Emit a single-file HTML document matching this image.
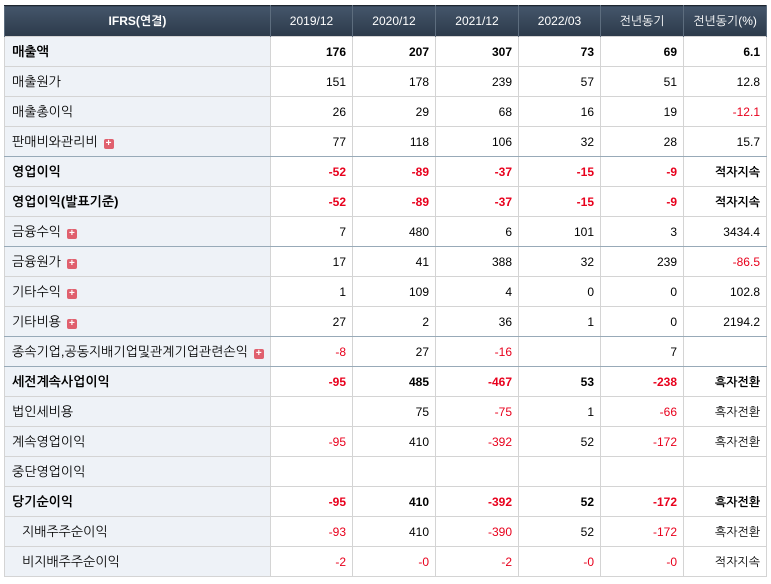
<!DOCTYPE html>
<html><head><meta charset="utf-8"><style>
body{margin:0;background:#fff;}
table{position:absolute;left:4px;top:5px;border-collapse:collapse;table-layout:fixed;width:762px;font-family:"Liberation Sans","NanumGothic","Noto Sans CJK KR",sans-serif;font-size:12px;color:#000;}
th{height:30px;padding:0;background:linear-gradient(#44556a,#2c3a4a);color:#fff;font-weight:normal;border-left:1px solid #5d6d7e;border-right:1px solid #5d6d7e;border-top:1px solid #1e2630;text-align:center;font-size:12px;}
th.f{font-weight:bold}
td{height:29px;padding:0 6px 0 0;border:1px solid #d4d4d4;text-align:right;line-height:14px;}
td.l{text-align:left;padding-left:7px;background:#eef2f7;font-size:13px;}
td.in{padding-left:17px}
tr.b td{font-weight:bold}
.r{color:#e8001c}
tr.e td{border-bottom-color:#98aab8}
.p{display:inline-block;width:10px;height:10px;background:#e0606e;border-radius:2px;color:#fff;font-size:10px;line-height:10px;text-align:center;margin-left:6px;vertical-align:0px;font-weight:bold}
</style></head><body>
<table>
<colgroup><col style="width:266px"><col style="width:82px"><col style="width:83px"><col style="width:83px"><col style="width:82px"><col style="width:83px"><col style="width:83px"></colgroup>
<tr><th class="f">IFRS(연결)</th><th>2019/12</th><th>2020/12</th><th>2021/12</th><th>2022/03</th><th>전년동기</th><th>전년동기(%)</th></tr>
<tr class="b"><td class="l">매출액</td><td>176</td><td>207</td><td>307</td><td>73</td><td>69</td><td>6.1</td></tr>
<tr><td class="l">매출원가</td><td>151</td><td>178</td><td>239</td><td>57</td><td>51</td><td>12.8</td></tr>
<tr><td class="l">매출총이익</td><td>26</td><td>29</td><td>68</td><td>16</td><td>19</td><td class="r">-12.1</td></tr>
<tr class="e"><td class="l">판매비와관리비<span class="p">+</span></td><td>77</td><td>118</td><td>106</td><td>32</td><td>28</td><td>15.7</td></tr>
<tr class="b"><td class="l">영업이익</td><td class="r">-52</td><td class="r">-89</td><td class="r">-37</td><td class="r">-15</td><td class="r">-9</td><td>적자지속</td></tr>
<tr class="b"><td class="l">영업이익(발표기준)</td><td class="r">-52</td><td class="r">-89</td><td class="r">-37</td><td class="r">-15</td><td class="r">-9</td><td>적자지속</td></tr>
<tr class="e"><td class="l">금융수익<span class="p">+</span></td><td>7</td><td>480</td><td>6</td><td>101</td><td>3</td><td>3434.4</td></tr>
<tr><td class="l">금융원가<span class="p">+</span></td><td>17</td><td>41</td><td>388</td><td>32</td><td>239</td><td class="r">-86.5</td></tr>
<tr><td class="l">기타수익<span class="p">+</span></td><td>1</td><td>109</td><td>4</td><td>0</td><td>0</td><td>102.8</td></tr>
<tr class="e"><td class="l">기타비용<span class="p">+</span></td><td>27</td><td>2</td><td>36</td><td>1</td><td>0</td><td>2194.2</td></tr>
<tr class="e"><td class="l">종속기업,공동지배기업및관계기업관련손익<span class="p">+</span></td><td class="r">-8</td><td>27</td><td class="r">-16</td><td></td><td>7</td><td></td></tr>
<tr class="b"><td class="l">세전계속사업이익</td><td class="r">-95</td><td>485</td><td class="r">-467</td><td>53</td><td class="r">-238</td><td>흑자전환</td></tr>
<tr><td class="l">법인세비용</td><td></td><td>75</td><td class="r">-75</td><td>1</td><td class="r">-66</td><td>흑자전환</td></tr>
<tr><td class="l">계속영업이익</td><td class="r">-95</td><td>410</td><td class="r">-392</td><td>52</td><td class="r">-172</td><td>흑자전환</td></tr>
<tr><td class="l">중단영업이익</td><td></td><td></td><td></td><td></td><td></td><td></td></tr>
<tr class="b"><td class="l">당기순이익</td><td class="r">-95</td><td>410</td><td class="r">-392</td><td>52</td><td class="r">-172</td><td>흑자전환</td></tr>
<tr><td class="l in">지배주주순이익</td><td class="r">-93</td><td>410</td><td class="r">-390</td><td>52</td><td class="r">-172</td><td>흑자전환</td></tr>
<tr><td class="l in">비지배주주순이익</td><td class="r">-2</td><td class="r">-0</td><td class="r">-2</td><td class="r">-0</td><td class="r">-0</td><td>적자지속</td></tr>
</table>
</body></html>
